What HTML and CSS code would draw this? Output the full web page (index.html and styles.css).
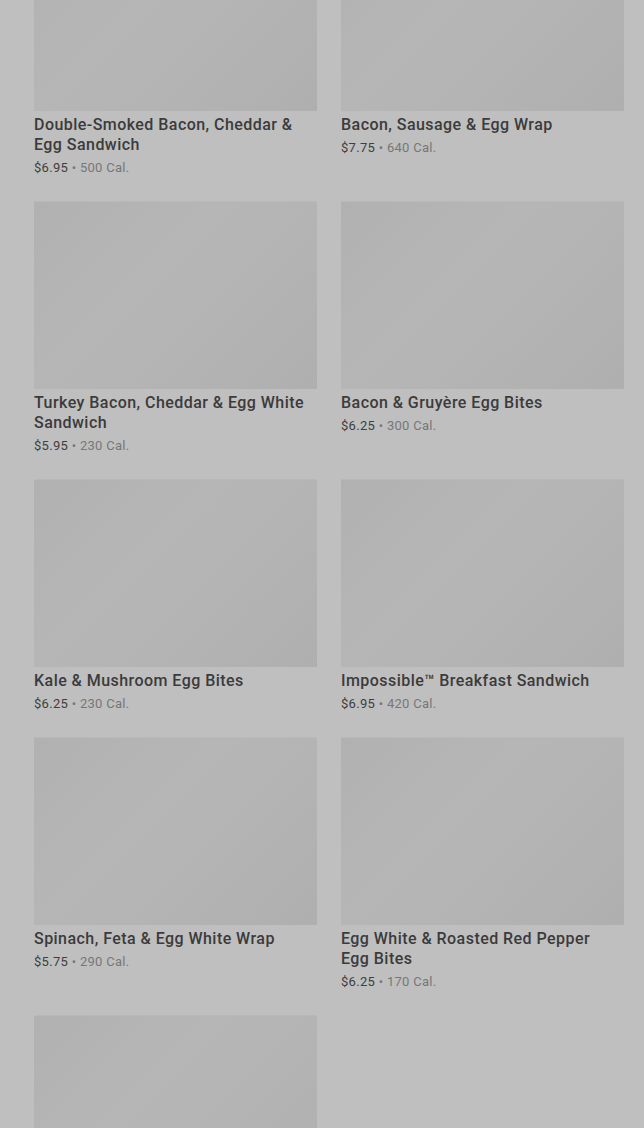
FILE: index.html
```html
<!DOCTYPE html>
<html lang="en">
<head>
    <meta charset="UTF-8">
    <meta name="viewport" content="width=device-width, initial-scale=1.0">
    <title>Breakfast Menu</title>
    <link rel="stylesheet" href="styles.css">
</head>
<body>
    <div class="menu-grid">
        <div class="product">
            <div class="product-image"></div>
            <h3 class="product-name">Double-Smoked Bacon, Cheddar &amp; Egg Sandwich</h3>
            <p class="product-info"><span class="price">$6.95</span> • 500 Cal.</p>
        </div>
        <div class="product">
            <div class="product-image"></div>
            <h3 class="product-name">Bacon, Sausage &amp; Egg Wrap</h3>
            <p class="product-info"><span class="price">$7.75</span> • 640 Cal.</p>
        </div>
        <div class="product">
            <div class="product-image"></div>
            <h3 class="product-name">Turkey Bacon, Cheddar &amp; Egg White Sandwich</h3>
            <p class="product-info"><span class="price">$5.95</span> • 230 Cal.</p>
        </div>
        <div class="product">
            <div class="product-image"></div>
            <h3 class="product-name">Bacon &amp; Gruyère Egg Bites</h3>
            <p class="product-info"><span class="price">$6.25</span> • 300 Cal.</p>
        </div>
        <div class="product">
            <div class="product-image"></div>
            <h3 class="product-name">Kale &amp; Mushroom Egg Bites</h3>
            <p class="product-info"><span class="price">$6.25</span> • 230 Cal.</p>
        </div>
        <div class="product">
            <div class="product-image"></div>
            <h3 class="product-name">Impossible™ Breakfast Sandwich</h3>
            <p class="product-info"><span class="price">$6.95</span> • 420 Cal.</p>
        </div>
        <div class="product">
            <div class="product-image"></div>
            <h3 class="product-name">Spinach, Feta &amp; Egg White Wrap</h3>
            <p class="product-info"><span class="price">$5.75</span> • 290 Cal.</p>
        </div>
        <div class="product">
            <div class="product-image"></div>
            <h3 class="product-name">Egg White &amp; Roasted Red Pepper Egg Bites</h3>
            <p class="product-info"><span class="price">$6.25</span> • 170 Cal.</p>
        </div>
        <div class="product">
            <div class="product-image"></div>
        </div>
    </div>
</body>
</html>
```

FILE: styles.css
```css
body {
    margin: 0;
    padding: 0;
    background-color: #bfbfbf;
    font-family: Roboto, "Liberation Sans", sans-serif;
    overflow: hidden;
    height: 1128px;
}
.menu-grid {
    display: grid;
    grid-template-columns: 283px 283px;
    column-gap: 24px;
    row-gap: 23px;
    padding: 0 20px 0 34px;
    margin-top: -77px; /* page is scrolled */
}
.product-image {
    height: 188px;
    background: linear-gradient(135deg, #b1b1b1 0%, #b6b6b6 40%, #b3b3b3 70%, #afafaf 100%);
    border-top: 1px solid #b9b9b9;
    box-sizing: border-box;
}
.product-name {
    margin: 4px 0 0;
    padding-right: 8px;
    font-size: 16px;
    line-height: 20px;
    font-weight: 500;
    letter-spacing: 0.45px;
    color: #3b3b3b;
}
.product-info {
    margin: 3px 0 0;
    font-size: 13px;
    line-height: 20px;
    letter-spacing: 0.3px;
    color: #777777;
}
.price {
    color: #404040;
}
```
